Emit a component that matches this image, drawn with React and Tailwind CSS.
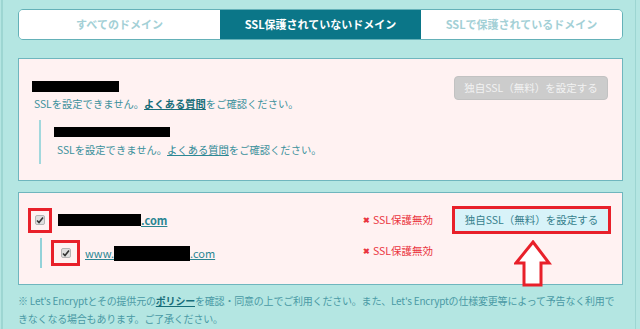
import React from 'react';

const font = { fontFamily: '"Noto Sans CJK JP", "Noto Sans", sans-serif' };

function Check() {
  return (
    <span className="flex h-[10px] w-[10px] items-center justify-center rounded-[2px] border border-[#b5b5b5] bg-[#dedede]">
      <svg width="8" height="8" viewBox="0 0 8 8">
        <path d="M1 4.5 L3 6.5 L7 1.5" fill="none" stroke="#333" strokeWidth="1.6" />
      </svg>
    </span>
  );
}

function Status() {
  return (
    <div className="flex w-[89px] items-center gap-[3px] text-[10.5px] text-[#ea3540]">
      <span className="text-[8px] font-bold">✖</span>
      <span>SSL保護無効</span>
    </div>
  );
}

export default function App() {
  return (
    <div className="h-[329px] w-[640px] overflow-hidden bg-[#b4e6e2]" style={font}>
      <div className="ml-[1px] mr-[4px] h-full border-l-2 border-r border-[#9dd6d2] pl-[15px] pr-[12px] pt-[9px]">
        {/* Tabs */}
        <div className="flex h-[31px] overflow-hidden rounded-[5px] border border-[#64b1b8] text-[11px] font-bold">
          <div className="flex flex-1 items-center justify-center bg-white text-[#a3d0d6]">すべてのドメイン</div>
          <div className="flex flex-1 items-center justify-center bg-[#0b7688] text-white">SSL保護されていないドメイン</div>
          <div className="flex flex-1 items-center justify-center bg-white text-[#a3d0d6]">SSLで保護されているドメイン</div>
        </div>

        {/* Panel 1 */}
        <div className="mt-[18px] flex h-[123px] justify-between border border-[#6fb6be] bg-[#fff2f2] pl-[13px] pr-[14px] pt-[17px]">
          <div className="pt-[5px]">
            <div className="h-[11px] w-[87px] bg-black" />
            <p className="mt-[4px] pl-[2px] text-[10.3px] text-[#3c919c]">
              SSLを設定できません。<a className="font-bold text-[#176d79] underline">よくある質問</a>をご確認ください。
            </p>
            <div className="ml-[7px] mt-[9px] border-l-2 border-[#a2d8dd] pb-[6px] pl-[13px] pt-[7px]">
              <div className="h-[10px] w-[116px] bg-black" />
              <p className="mt-[5px] pl-[3px] text-[10.3px] text-[#3c919c]">
                SSLを設定できません。<a className="text-[#2c8794] underline">よくある質問</a>をご確認ください。
              </p>
            </div>
          </div>
          <button className="h-[24px] w-[154px] rounded-[4px] border border-[#c2c2c2] bg-[#cccccc] text-[10.5px] text-[#f2f2f2]">
            独自SSL（無料）を設定する
          </button>
        </div>

        {/* Panel 2 */}
        <div className="relative mt-[11px] h-[93px] border border-[#6fb6be] bg-[#fff2f2] pl-[9px] pt-[13px]">
          <div className="flex items-center">
            <div className="flex w-[335px] items-center">
              <div className="flex h-[25px] w-[24px] items-center justify-center border-[3px] border-[#e8202a]">
                <Check />
              </div>
              <div className="ml-[6px] h-[12px] w-[83px] bg-black" />
              <a className="text-[11px] font-bold text-[#2a8592] underline">.com</a>
            </div>
            <Status />
            <button className="flex h-[28px] w-[159px] items-center justify-center border-[3px] border-[#e8202a] bg-[#d8f3f9] text-[10.5px] text-[#367f8c]">
              独自SSL（無料）を設定する
            </button>
          </div>
          <div className="flex items-center">
            <div className="ml-[12px] mt-[4px] flex h-[30px] w-[323px] items-center border-l-2 border-[#93d2d9] pl-[9px]">
              <div className="flex h-[26px] w-[29px] items-center justify-center border-[3px] border-[#e8202a]">
                <Check />
              </div>
              <a className="ml-[5px] flex items-center text-[11px] text-[#2a8592] underline">
                www.<span className="inline-block h-[15px] w-[76px] bg-black" />.com
              </a>
            </div>
            <Status />
          </div>
          <svg className="absolute left-[495px] top-[47px]" width="38" height="48" viewBox="0 0 38 48">
            <path
              d="M19 2 L35 23 L27 23 L27 45 L10 45 L10 23 L2 23 Z"
              fill="white"
              stroke="#e8202a"
              strokeWidth="3"
              strokeLinejoin="miter"
            />
          </svg>
        </div>

        {/* Footer note */}
        <div className="mt-[7px] text-[10px] leading-[18px] tracking-[-0.2px] text-[#4a9aa5]">
          <p className="whitespace-nowrap">
            ※ Let's Encryptとその提供元の<a className="font-bold text-[#176d79] underline">ポリシー</a>を確認・同意の上でご利用ください。また、Let's Encryptの仕様変更等によって予告なく利用で
          </p>
          <p className="whitespace-nowrap">きなくなる場合もあります。ご了承ください。</p>
        </div>
      </div>
    </div>
  );
}
